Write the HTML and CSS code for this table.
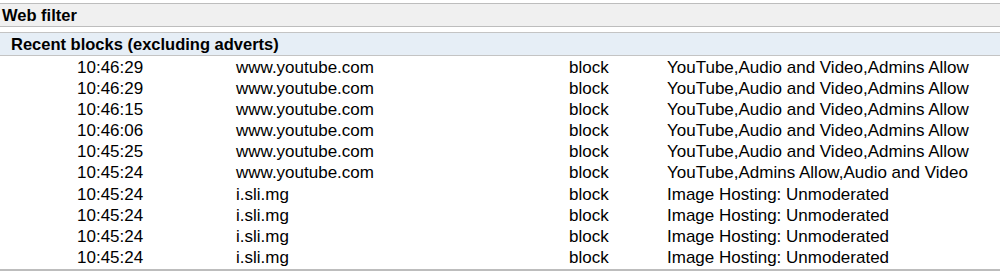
FILE: index.html
```html
<!DOCTYPE html>
<html>
<head>
<meta charset="utf-8">
<link rel="stylesheet" href="styles.css">
</head>
<body>
<div class="panel">
  <div class="panel-title">Web filter</div>
  <div class="section">
    <div class="section-title">Recent blocks (excluding adverts)</div>
    <div class="rows">
      <div class="row"><span class="time">10:46:29</span><span class="host">www.youtube.com</span><span class="action">block</span><span class="cat">YouTube,Audio and Video,Admins Allow</span></div>
      <div class="row"><span class="time">10:46:29</span><span class="host">www.youtube.com</span><span class="action">block</span><span class="cat">YouTube,Audio and Video,Admins Allow</span></div>
      <div class="row"><span class="time">10:46:15</span><span class="host">www.youtube.com</span><span class="action">block</span><span class="cat">YouTube,Audio and Video,Admins Allow</span></div>
      <div class="row"><span class="time">10:46:06</span><span class="host">www.youtube.com</span><span class="action">block</span><span class="cat">YouTube,Audio and Video,Admins Allow</span></div>
      <div class="row"><span class="time">10:45:25</span><span class="host">www.youtube.com</span><span class="action">block</span><span class="cat">YouTube,Audio and Video,Admins Allow</span></div>
      <div class="row"><span class="time">10:45:24</span><span class="host">www.youtube.com</span><span class="action">block</span><span class="cat">YouTube,Admins Allow,Audio and Video</span></div>
      <div class="row"><span class="time">10:45:24</span><span class="host">i.sli.mg</span><span class="action">block</span><span class="cat">Image Hosting: Unmoderated</span></div>
      <div class="row"><span class="time">10:45:24</span><span class="host">i.sli.mg</span><span class="action">block</span><span class="cat">Image Hosting: Unmoderated</span></div>
      <div class="row"><span class="time">10:45:24</span><span class="host">i.sli.mg</span><span class="action">block</span><span class="cat">Image Hosting: Unmoderated</span></div>
      <div class="row"><span class="time">10:45:24</span><span class="host">i.sli.mg</span><span class="action">block</span><span class="cat">Image Hosting: Unmoderated</span></div>
    </div>
  </div>
</div>
</body>
</html>
```
FILE: styles.css
```css
html, body {
  margin: 0;
  padding: 0;
  background: #ffffff;
}
body {
  font-family: "Liberation Sans", Arial, sans-serif;
  color: #000;
}
.panel {
  padding-top: 3px;
}
.panel-title {
  background: #f0f0f0;
  border-top: 1px solid #bdbdbd;
  border-bottom: 1px solid #bdbdbd;
  height: 22px;
  line-height: 22px;
  font-size: 16.5px;
  font-weight: bold;
  padding-left: 2px;
}
.section {
  margin-top: 5px;
}
.section-title {
  background: #e6eef6;
  border-top: 1px solid #c4c4c4;
  border-bottom: 1px solid #c4c4c4;
  height: 22px;
  line-height: 22px;
  font-size: 16.5px;
  font-weight: bold;
  padding-left: 11px;
}
.rows {
  padding-top: 1px;
  border-bottom: 2px solid #bdbdbd;
  padding-bottom: 1px;
}
.row {
  display: grid;
  grid-template-columns: 236px 333px 98px 1fr;
  height: 21.1px;
  line-height: 21px;
  font-size: 17px;
}
.time {
  padding-left: 77px;
}
```
